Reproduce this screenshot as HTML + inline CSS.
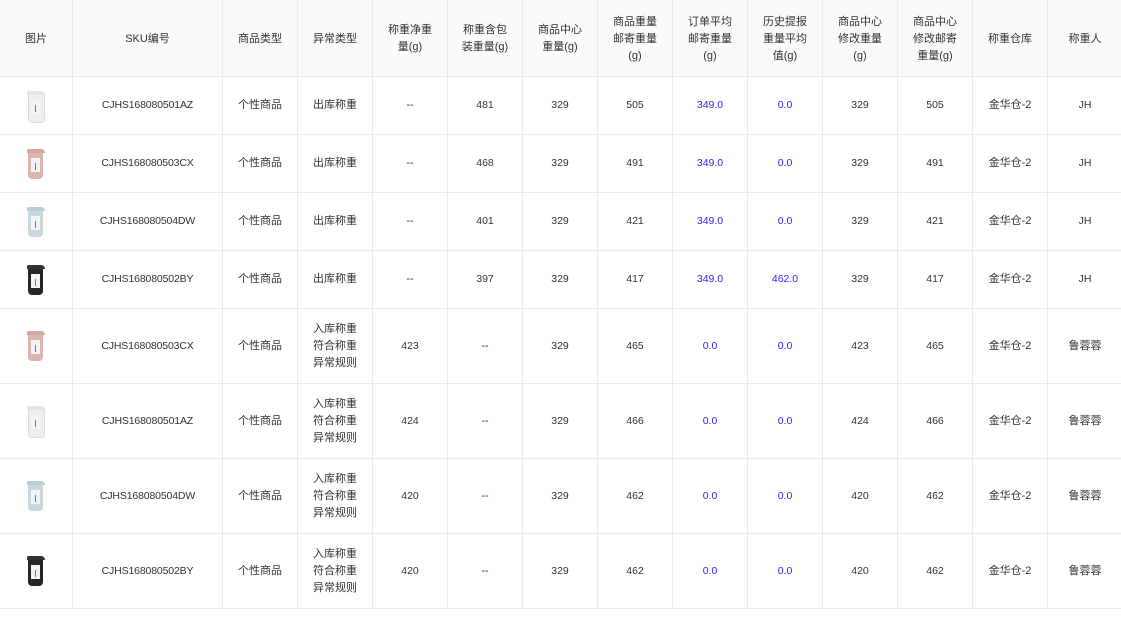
<!DOCTYPE html>
<html><head><meta charset="utf-8">
<style>
html,body{margin:0;padding:0;background:#fff;width:1121px;height:622px;overflow:hidden}
table{border-collapse:collapse;table-layout:fixed;font-family:"Liberation Sans","Noto Sans CJK SC",sans-serif;font-size:11px;color:#333}
td,th{border:1px solid #ebebeb;text-align:center;padding:0 12px;line-height:17px;font-weight:normal;word-break:break-all}
th{background:#fafafa;height:74px;padding-top:2px}
tr.a td{height:57px}
tr.b td{height:74px}
table{margin-top:-1px;margin-left:-1px;width:1123px}
.s{font-size:10.5px;letter-spacing:-0.15px}
.n{font-size:10.5px}
.u{color:#3a1cf0}
.cup{position:relative;width:22px;height:32px;margin:0 auto}
.cup .b{position:absolute;left:3px;top:3px;width:15px;height:28px;border-radius:1px 1px 4px 4px}
.cup .l{position:absolute;left:2px;top:1px;width:18px;height:4px;border-radius:2px 5px 0 0}
.cup .w{position:absolute;left:6px;top:10px;width:9px;height:14px;background:#f4f4f4}
.cup .w:after{content:"";position:absolute;left:4px;top:5px;width:1px;height:7px;background:#777}
</style></head><body>
<table>
<colgroup><col style="width:73px"><col style="width:150px"><col style="width:75px"><col style="width:75px"><col style="width:75px"><col style="width:75px"><col style="width:75px"><col style="width:75px"><col style="width:75px"><col style="width:75px"><col style="width:75px"><col style="width:75px"><col style="width:75px"><col style="width:75px"></colgroup>
<tr><th>图片</th><th>SKU编号</th><th>商品类型</th><th>异常类型</th><th>称重净重量(g)</th><th>称重含包装重量(g)</th><th>商品中心重量(g)</th><th>商品重量邮寄重量(g)</th><th>订单平均邮寄重量(g)</th><th>历史提报重量平均值(g)</th><th>商品中心修改重量(g)</th><th>商品中心修改邮寄重量(g)</th><th>称重仓库</th><th>称重人</th></tr>
<tr class="a"><td><div class="cup"><div class="b" style="background:#eee;border:1px solid #ddd"></div><div class="l" style="background:#e4e4e4"></div><div class="w"></div></div></td><td class="s">CJHS168080501AZ</td><td>个性商品</td><td>出库称重</td><td>--</td><td class="n">481</td><td class="n">329</td><td class="n">505</td><td class="u n">349.0</td><td class="u n">0.0</td><td class="n">329</td><td class="n">505</td><td>金华仓-2</td><td class="n">JH</td></tr>
<tr class="a"><td><div class="cup"><div class="b" style="background:#dcb6ad"></div><div class="l" style="background:#d2aaa1"></div><div class="w"></div></div></td><td class="s">CJHS168080503CX</td><td>个性商品</td><td>出库称重</td><td>--</td><td class="n">468</td><td class="n">329</td><td class="n">491</td><td class="u n">349.0</td><td class="u n">0.0</td><td class="n">329</td><td class="n">491</td><td>金华仓-2</td><td class="n">JH</td></tr>
<tr class="a"><td><div class="cup"><div class="b" style="background:#c9d7df"></div><div class="l" style="background:#bccbd4"></div><div class="w"></div></div></td><td class="s">CJHS168080504DW</td><td>个性商品</td><td>出库称重</td><td>--</td><td class="n">401</td><td class="n">329</td><td class="n">421</td><td class="u n">349.0</td><td class="u n">0.0</td><td class="n">329</td><td class="n">421</td><td>金华仓-2</td><td class="n">JH</td></tr>
<tr class="a"><td><div class="cup"><div class="b" style="background:#262626"></div><div class="l" style="background:#333"></div><div class="w"></div></div></td><td class="s">CJHS168080502BY</td><td>个性商品</td><td>出库称重</td><td>--</td><td class="n">397</td><td class="n">329</td><td class="n">417</td><td class="u n">349.0</td><td class="u n">462.0</td><td class="n">329</td><td class="n">417</td><td>金华仓-2</td><td class="n">JH</td></tr>
<tr class="b"><td><div class="cup"><div class="b" style="background:#dcb6ad"></div><div class="l" style="background:#d2aaa1"></div><div class="w"></div></div></td><td class="s">CJHS168080503CX</td><td>个性商品</td><td>入库称重符合称重异常规则</td><td class="n">423</td><td>--</td><td class="n">329</td><td class="n">465</td><td class="u n">0.0</td><td class="u n">0.0</td><td class="n">423</td><td class="n">465</td><td>金华仓-2</td><td>鲁蓉蓉</td></tr>
<tr class="b"><td><div class="cup"><div class="b" style="background:#eee;border:1px solid #ddd"></div><div class="l" style="background:#e4e4e4"></div><div class="w"></div></div></td><td class="s">CJHS168080501AZ</td><td>个性商品</td><td>入库称重符合称重异常规则</td><td class="n">424</td><td>--</td><td class="n">329</td><td class="n">466</td><td class="u n">0.0</td><td class="u n">0.0</td><td class="n">424</td><td class="n">466</td><td>金华仓-2</td><td>鲁蓉蓉</td></tr>
<tr class="b"><td><div class="cup"><div class="b" style="background:#c9d7df"></div><div class="l" style="background:#bccbd4"></div><div class="w"></div></div></td><td class="s">CJHS168080504DW</td><td>个性商品</td><td>入库称重符合称重异常规则</td><td class="n">420</td><td>--</td><td class="n">329</td><td class="n">462</td><td class="u n">0.0</td><td class="u n">0.0</td><td class="n">420</td><td class="n">462</td><td>金华仓-2</td><td>鲁蓉蓉</td></tr>
<tr class="b"><td><div class="cup"><div class="b" style="background:#262626"></div><div class="l" style="background:#333"></div><div class="w"></div></div></td><td class="s">CJHS168080502BY</td><td>个性商品</td><td>入库称重符合称重异常规则</td><td class="n">420</td><td>--</td><td class="n">329</td><td class="n">462</td><td class="u n">0.0</td><td class="u n">0.0</td><td class="n">420</td><td class="n">462</td><td>金华仓-2</td><td>鲁蓉蓉</td></tr>
</table>
</body></html>
